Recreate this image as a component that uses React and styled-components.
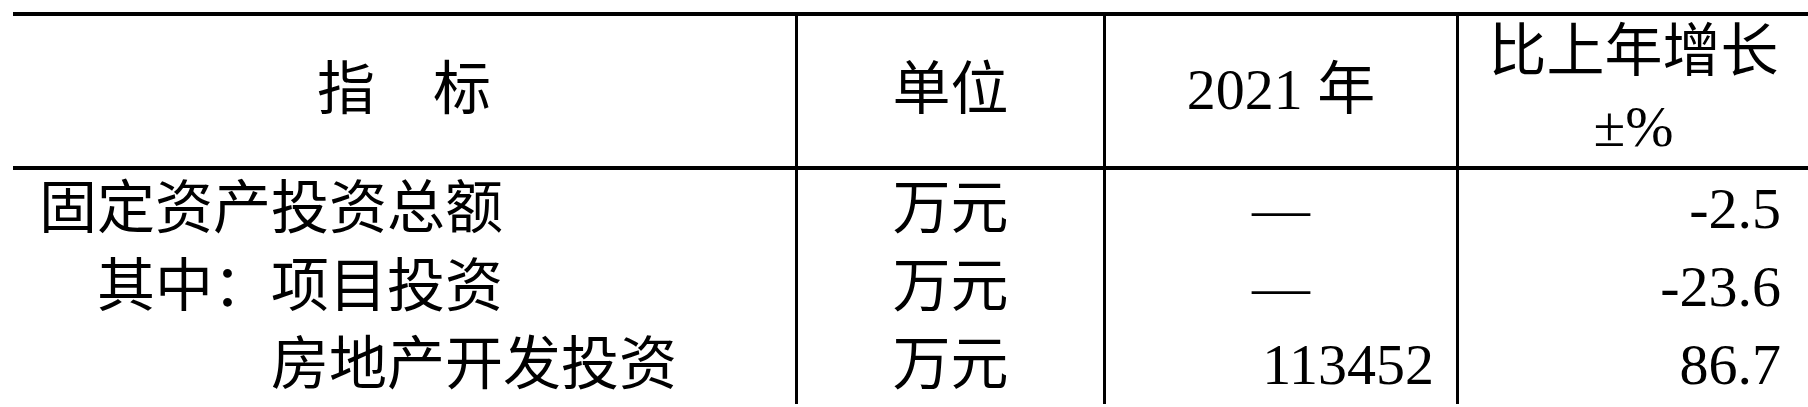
import styled, { createGlobalStyle } from 'styled-components';

const Global = createGlobalStyle`
  html, body {
    margin: 0;
    padding: 0;
    background: #fff;
  }
  body {
    font-family: 'Liberation Serif', 'Noto Sans CJK SC', serif;
    color: #000;
  }
`;

const Page = styled.div`
  width: 1808px;
  height: 407px;
  overflow: hidden;
  padding: 12px 0 0 13px;
  box-sizing: border-box;
`;

const Table = styled.div`
  display: grid;
  grid-template-columns: 782px 308px 353px 352px;
  border-top: 4px solid #000;
  font-size: 58px;
`;

const Cell = styled.div`
  box-sizing: border-box;
  border-left: ${(p) => (p.$first ? 'none' : '3px solid #000')};
  text-align: ${(p) => p.$align || 'center'};
  white-space: nowrap;
`;

const HeadCell = styled(Cell)`
  height: 154px;
  border-bottom: 4px solid #000;
  display: flex;
  flex-direction: column;
  justify-content: center;
  align-items: center;
  line-height: 75px;
  padding-bottom: 4px;
`;

const BodyCell = styled(Cell)`
  height: 78px;
  line-height: 78px;
  padding-left: ${(p) => (p.$first ? 26 + p.$indent * 58 + 'px' : '0')};
  padding-right: ${(p) => p.$pr || '0'};
`;

const rows = [
  { name: '固定资产投资总额', indent: 0, unit: '万元', value: '—', growth: '-2.5' },
  { name: '其中：项目投资', indent: 1, unit: '万元', value: '—', growth: '-23.6' },
  { name: '房地产开发投资', indent: 4, unit: '万元', value: '113452', growth: '86.7' },
];

export default function App() {
  return (
    <>
      <Global />
      <Page>
        <Table>
          <HeadCell $first>指　标</HeadCell>
          <HeadCell>单位</HeadCell>
          <HeadCell>2021 年</HeadCell>
          <HeadCell>
            <span>比上年增长</span>
            <span>±%</span>
          </HeadCell>
          {rows.map((r) => (
            <>
              <BodyCell $first $align='left' $indent={r.indent}>
                {r.name}
              </BodyCell>
              <BodyCell>{r.unit}</BodyCell>
              {r.value === '—' ? (
                <BodyCell>{r.value}</BodyCell>
              ) : (
                <BodyCell $align='right' $pr='22px'>
                  {r.value}
                </BodyCell>
              )}
              <BodyCell $align='right' $pr='27px'>
                {r.growth}
              </BodyCell>
            </>
          ))}
        </Table>
      </Page>
    </>
  );
}
